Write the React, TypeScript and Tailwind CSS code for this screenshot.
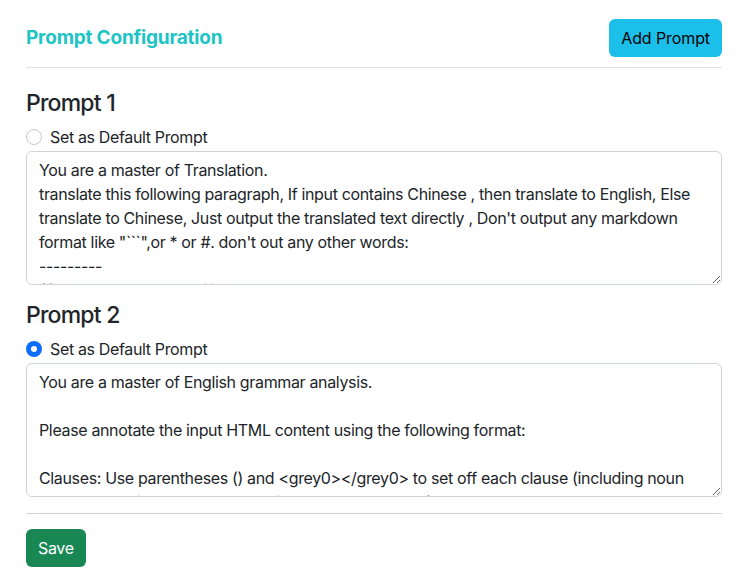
import { useState } from "react";

const prompts = [
  `You are a master of Translation.
translate this following paragraph, If input contains Chinese , then translate to English, Else translate to Chinese, Just output the translated text directly , Don't output any markdown format like "\`\`\`",or * or #. don't out any other words:
---------
{{ text to be translated }}`,
  `You are a master of English grammar analysis.

Please annotate the input HTML content using the following format:

Clauses: Use parentheses () and <grey0></grey0> to set off each clause (including noun phrases, relative clauses, adverbial clauses and so on).`,
];

export default function App() {
  const [defaultIdx, setDefaultIdx] = useState(1);

  return (
    <div
      className="pl-[26px] pr-[30px] pt-[19px] text-[#212529] bg-white tracking-[-0.35px]"
      style={{ fontFamily: "Inter, 'Noto Sans', sans-serif" }}
    >
      <div className="flex items-center justify-between pb-[10px] border-b border-[#dee2e6]">
        <h5 className="text-[19px] font-bold text-[#20c4c4] tracking-[-0.2px]">Prompt Configuration</h5>
        <button className="h-[38px] px-3 rounded-md bg-[#1cbfea] text-black text-base tracking-[-0.1px]">
          Add Prompt
        </button>
      </div>

      <div className="pt-[21px]">
        {prompts.map((text, i) => (
          <div key={i} className="mb-4">
            <h4 className="text-[23px] font-medium leading-[1.25] mb-[7px] tracking-[-0.8px]">Prompt {i + 1}</h4>
            <label className="flex items-center gap-2 h-6 mb-[2px] cursor-pointer">
              <span
                className={
                  defaultIdx === i
                    ? "w-4 h-4 rounded-full bg-[#0d6efd] flex items-center justify-center"
                    : "w-4 h-4 rounded-full border border-[#c4c8cc] bg-white"
                }
                onClick={() => setDefaultIdx(i)}
              >
                {defaultIdx === i && <span className="w-[6px] h-[6px] rounded-full bg-white" />}
              </span>
              <span className="text-base">Set as Default Prompt</span>
            </label>
            <textarea
              defaultValue={text}
              className="block w-full h-[134px] px-3 py-[6px] text-base leading-6 border border-[#ced4da] rounded-md outline-none"
            />
          </div>
        ))}
      </div>

      <div className="border-t border-[#ced4da] mt-[14px] pt-[15px]">
        <button className="h-[38px] px-3 rounded-md bg-[#198754] text-white text-base">Save</button>
      </div>
    </div>
  );
}
